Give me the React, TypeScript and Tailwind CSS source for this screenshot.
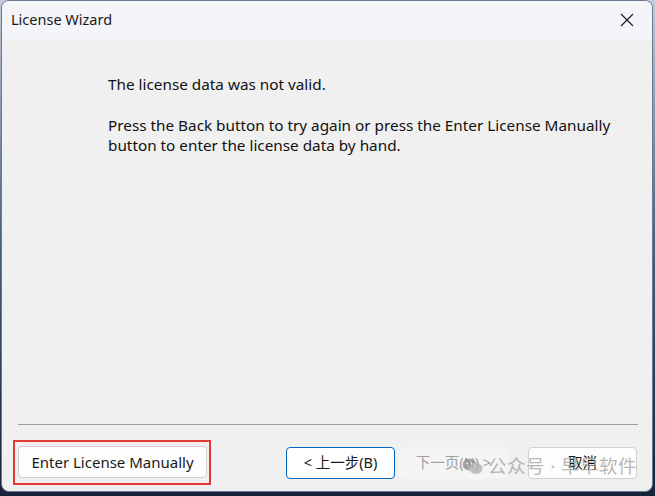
import React from 'react'

const font = { fontFamily: '"Segoe UI", "Noto Sans", "Noto Sans CJK SC", sans-serif' }

function WizardButton({
  children,
  variant = 'normal',
}: {
  children: React.ReactNode
  variant?: 'normal' | 'primary' | 'disabled'
}) {
  const styles =
    variant === 'primary'
      ? 'border-[#0067c0] bg-white text-[#1a1a1a]'
      : variant === 'disabled'
        ? 'border-[#f5f5f5] bg-[#f5f5f5] text-[#a0a0a0]'
        : 'border-[#d0d0d0] bg-[#fdfdfd] text-[#1a1a1a]'
  return (
    <button
      className={`h-[32px] w-[109px] rounded-[4px] border text-[14.5px] leading-none ${styles}`}
    >
      {children}
    </button>
  )
}

function App() {
  return (
    <div
      className="h-[496px] w-[655px] bg-gradient-to-b from-[#c3ccd8] via-[#4a5d7a] to-[#16223a] pb-[4px] pl-[1px] pr-[2px]"
      style={font}
    >
      <div className="relative flex h-full flex-col overflow-hidden rounded-[8px] border border-[#6b7a90] bg-[#f0f0f0]">
        {/* title bar */}
        <div className="flex h-[38px] items-center justify-between bg-[#f3f5f9] pl-[9px] pr-[18px]">
          <span className="text-[14.5px] text-[#1a1a1a]">License Wizard</span>
          <svg width="14" height="14" viewBox="0 0 14 14" className="text-[#1a1a1a]">
            <path d="M1 1 L13 13 M13 1 L1 13" stroke="currentColor" strokeWidth="1.1" />
          </svg>
        </div>

        {/* message */}
        <div className="flex-1 pl-[106px] pt-[36px] text-[15.3px] leading-[19.5px] text-[#111]">
          <p>The license data was not valid.</p>
          <p className="mt-[21.5px] w-[530px]">
            Press the Back button to try again or press the Enter License Manually
            button to enter the license data by hand.
          </p>
        </div>

        {/* footer */}
        <div className="pb-[6px] pl-[11px]">
          <div className="ml-[5px] mr-[14px] h-px bg-[#a0a0a0]" />
          <div className="mt-[15px] flex items-center">
            <div className="border-[2px] border-[#e53838] pb-[5px] pl-[3px] pr-[2px] pt-[4px]">
              <button className="h-[32px] w-[189px] rounded-[4px] border border-[#d0d0d0] bg-[#fdfdfd] text-[15px] text-[#1a1a1a]">
                Enter License Manually
              </button>
            </div>
            <div className="ml-[75px] flex gap-[4px]">
              <WizardButton variant="primary">&lt; 上一步(B)</WizardButton>
              <WizardButton variant="disabled">下一页(N) &gt;</WizardButton>
            </div>
            <div className="ml-[20px]">
              <WizardButton>取消</WizardButton>
            </div>
          </div>
        </div>

        {/* watermark */}
        <div className="pointer-events-none absolute left-[460px] top-[456px] flex items-center gap-[5px] whitespace-nowrap text-[18.5px] leading-none text-[#a0a0a0] opacity-75">
          <svg width="21" height="18" viewBox="0 0 21 18">
            <ellipse cx="7.5" cy="7.5" rx="7" ry="6" fill="#8f8f8f" />
            <ellipse cx="14" cy="11.5" rx="6.5" ry="5.5" fill="#b0b0b0" />
            <circle cx="5" cy="6.5" r="1" fill="#f0f0f0" />
            <circle cx="9.5" cy="6.5" r="1" fill="#f0f0f0" />
          </svg>
          <span className="tracking-[0.5px]">公众号 · 早早软件</span>
        </div>
      </div>
    </div>
  )
}

export default App
